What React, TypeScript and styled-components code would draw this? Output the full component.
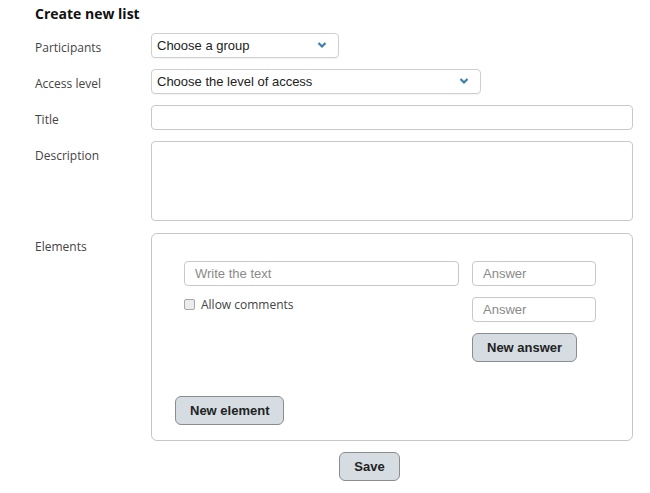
import React from 'react'
import styled, { createGlobalStyle } from 'styled-components'

const GlobalStyle = createGlobalStyle`
  body {
    margin: 0;
    background: #ffffff;
    font-family: 'Open Sans', 'Liberation Sans', sans-serif;
    color: #333333;
  }
`

const Page = styled.div`
  width: 598px;
  padding: 3px 0 0 35px;
`

const Heading = styled.h1`
  margin: 0 0 8px;
  font-size: 14px;
  line-height: 22px;
  font-weight: 700;
  color: #111111;
`

const Form = styled.form`
  display: grid;
  grid-template-columns: 116px 482px;
  row-gap: 11px;
`

const Label = styled.label`
  padding-top: 7px;
  font-size: 12px;
  line-height: 16px;
  color: #444444;
`

const SelectBox = styled.div<{ $width: number }>`
  box-sizing: border-box;
  width: ${({ $width }) => $width}px;
  height: 25px;
  border: 1px solid #cfcfcf;
  border-radius: 4px;
  box-shadow: 0 1px 1px rgba(0, 0, 0, 0.05);
  display: flex;
  align-items: center;
  justify-content: space-between;
  padding: 0 11px 1px 5px;
  font-family: 'Liberation Sans', Arial, sans-serif;
  font-size: 13px;
  color: #222222;
`

const Field = styled.input`
  box-sizing: border-box;
  width: 100%;
  height: 25px;
  border: 1px solid #c8c8c8;
  border-radius: 4px;
  padding: 0 10px;
  font-family: 'Liberation Sans', Arial, sans-serif;
  font-size: 13px;
  outline: none;

  &::placeholder {
    color: #8a8a8a;
  }
`

const TextArea = styled.textarea`
  box-sizing: border-box;
  width: 100%;
  height: 80px;
  border: 1px solid #c8c8c8;
  border-radius: 4px;
  resize: none;
  outline: none;
  display: block;
`

const ElementsBox = styled.div`
  box-sizing: border-box;
  margin-top: 1px;
  border: 1px solid #c6c6c6;
  border-radius: 6px;
  height: 208px;
  padding: 27px 36px 0 23px;
  display: flex;
  flex-direction: column;
`

const ElementRow = styled.div`
  display: grid;
  grid-template-columns: 275px 124px;
  column-gap: 13px;
  padding-left: 9px;
`

const Column = styled.div`
  display: flex;
  flex-direction: column;
  gap: 11px;
`

const CheckRow = styled.label`
  display: flex;
  align-items: center;
  gap: 6px;
  margin-top: -1px;
  font-size: 12px;
  color: #444444;
`

const Check = styled.input`
  appearance: none;
  margin: 0;
  width: 11px;
  height: 11px;
  border: 1px solid #a8a8a8;
  border-radius: 2px;
  background: #ececec;
`

const Button = styled.button`
  align-self: flex-start;
  height: 29px;
  padding: 0 14px;
  border: 1px solid #8c8c8c;
  border-radius: 6px;
  background: #d5dce2;
  font-family: 'Liberation Sans', Arial, sans-serif;
  font-weight: 700;
  font-size: 13px;
  color: #222222;
`

const ElementButton = styled(Button)`
  margin-top: auto;
  margin-bottom: 15px;
`

const Footer = styled.div`
  grid-column: 1 / 3;
  display: flex;
  justify-content: center;
  padding-left: 71px;
`

const Chevron = () => (
  <svg width="10" height="8" viewBox="0 0 10 8">
    <polyline points="1.5,2 5,5.5 8.5,2" fill="none" stroke="#3a7fae" strokeWidth="2.2" />
  </svg>
)

export default function App() {
  return (
    <>
      <GlobalStyle />
      <Page>
        <Heading>Create new list</Heading>
        <Form>
          <Label>Participants</Label>
          <SelectBox $width={188}>
            Choose a group
            <Chevron />
          </SelectBox>

          <Label>Access level</Label>
          <SelectBox $width={330}>
            Choose the level of access
            <Chevron />
          </SelectBox>

          <Label>Title</Label>
          <Field />

          <Label>Description</Label>
          <TextArea />

          <Label>Elements</Label>
          <ElementsBox>
            <ElementRow>
              <Column>
                <Field placeholder="Write the text" />
                <CheckRow>
                  <Check type="checkbox" />
                  Allow comments
                </CheckRow>
              </Column>
              <Column>
                <Field placeholder="Answer" />
                <Field placeholder="Answer" />
                <Button type="button">New answer</Button>
              </Column>
            </ElementRow>
            <ElementButton type="button">New element</ElementButton>
          </ElementsBox>

          <Footer>
            <Button type="button">Save</Button>
          </Footer>
        </Form>
      </Page>
    </>
  )
}
